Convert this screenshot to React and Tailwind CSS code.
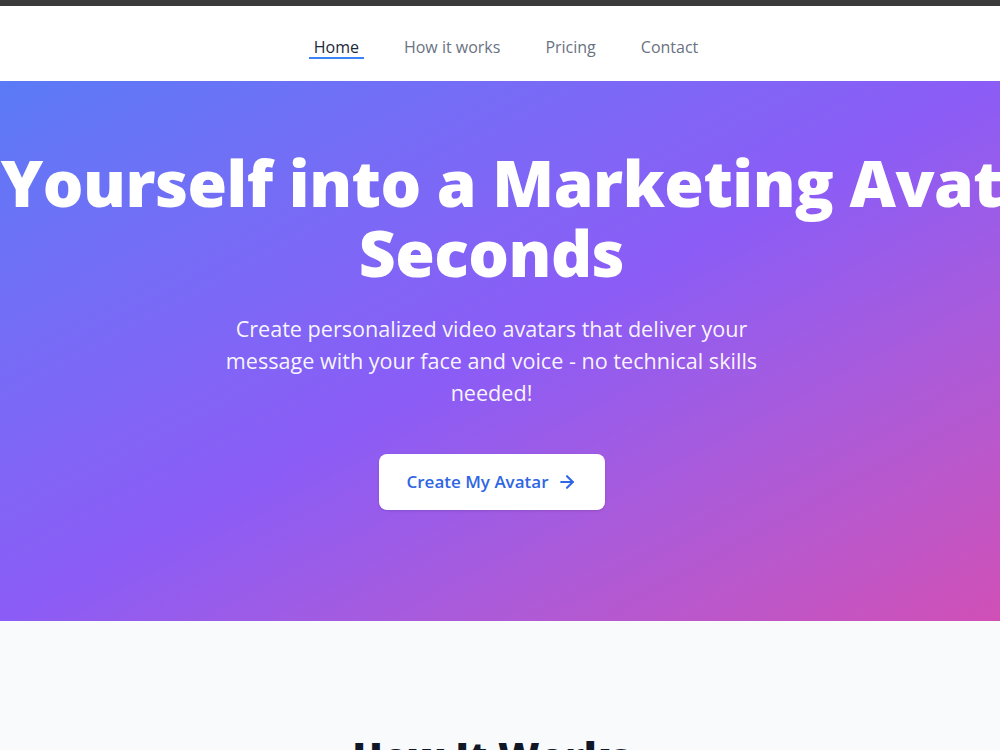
import React from 'react'
import { ArrowRight } from 'lucide-react'

const navLinks = [
  { label: 'Home', active: true },
  { label: 'How it works' },
  { label: 'Pricing' },
  { label: 'Contact' }
]

const steps = [
  { n: 1, title: 'Upload Your Photo', text: 'Take a selfie or upload a clear photo of your face.' },
  { n: 2, title: 'Record Your Voice', text: 'Read a short script so we can clone your voice.' },
  { n: 3, title: 'Get Your Avatar', text: 'Receive a video avatar ready for your marketing.' }
]

function Nav() {
  return (
    <nav className="bg-white">
      <div className="flex justify-center items-end h-[75px] pb-[22px] pl-[12px] gap-[35px]">
        {navLinks.map((link) => (
          <a
            key={link.label}
            href="#"
            className={`px-[5px] text-base leading-5 border-b-2 ${
              link.active
                ? 'text-gray-800 font-medium border-[#3b82f6]'
                : 'text-gray-500 font-medium border-transparent'
            }`}
          >
            {link.label}
          </a>
        ))}
      </div>
    </nav>
  )
}

function Hero() {
  return (
    <section className="h-[540px] overflow-hidden bg-gradient-to-br from-[#5a7af6] via-[#8b5cf6] to-[#d04fb6]">
      <div className="flex flex-col items-center pt-[67px] pr-[17px] text-white">
        {/* Heading overflows on both sides, like the original */}
        <h1 className="whitespace-nowrap text-center text-[64px] leading-[70px] font-extrabold tracking-[-0.5px]">
          Turn Yourself into a Marketing Avatar in
          <br />
          Seconds
        </h1>
        <p className="mt-[25px] max-w-[570px] text-center text-[21.6px] leading-[32px] text-white/95">
          Create personalized video avatars that deliver your message with your face and voice - no technical skills needed!
        </p>
        <button className="mt-[45px] flex items-center gap-2 bg-white rounded-lg h-14 px-7 text-[17px] font-semibold text-[#2f66e4] shadow-sm">
          Create My Avatar
          <ArrowRight className="w-5 h-5" strokeWidth={2.5} />
        </button>
      </div>
    </section>
  )
}

function HowItWorks() {
  return (
    <section className="bg-gray-50 pt-[112px] pb-20 pr-[17px]">
      <h2 className="text-center text-[40px] leading-[48px] font-extrabold text-gray-900">How It Works</h2>
      <div className="mt-12 max-w-5xl mx-auto grid grid-cols-3 gap-8 px-6">
        {steps.map((s) => (
          <div key={s.n} className="bg-white rounded-xl p-6 shadow-sm text-center">
            <div className="mx-auto w-12 h-12 rounded-full bg-blue-100 text-blue-600 flex items-center justify-center font-bold">
              {s.n}
            </div>
            <h3 className="mt-4 text-lg font-semibold text-gray-900">{s.title}</h3>
            <p className="mt-2 text-gray-600">{s.text}</p>
          </div>
        ))}
      </div>
    </section>
  )
}

export default function App() {
  return (
    <div className="min-h-screen bg-gray-50" style={{ fontFamily: '"Open Sans", "Noto Sans", sans-serif' }}>
      <div className="h-[6px] bg-[#3b3b3b]" />
      <Nav />
      <Hero />
      <HowItWorks />
    </div>
  )
}
